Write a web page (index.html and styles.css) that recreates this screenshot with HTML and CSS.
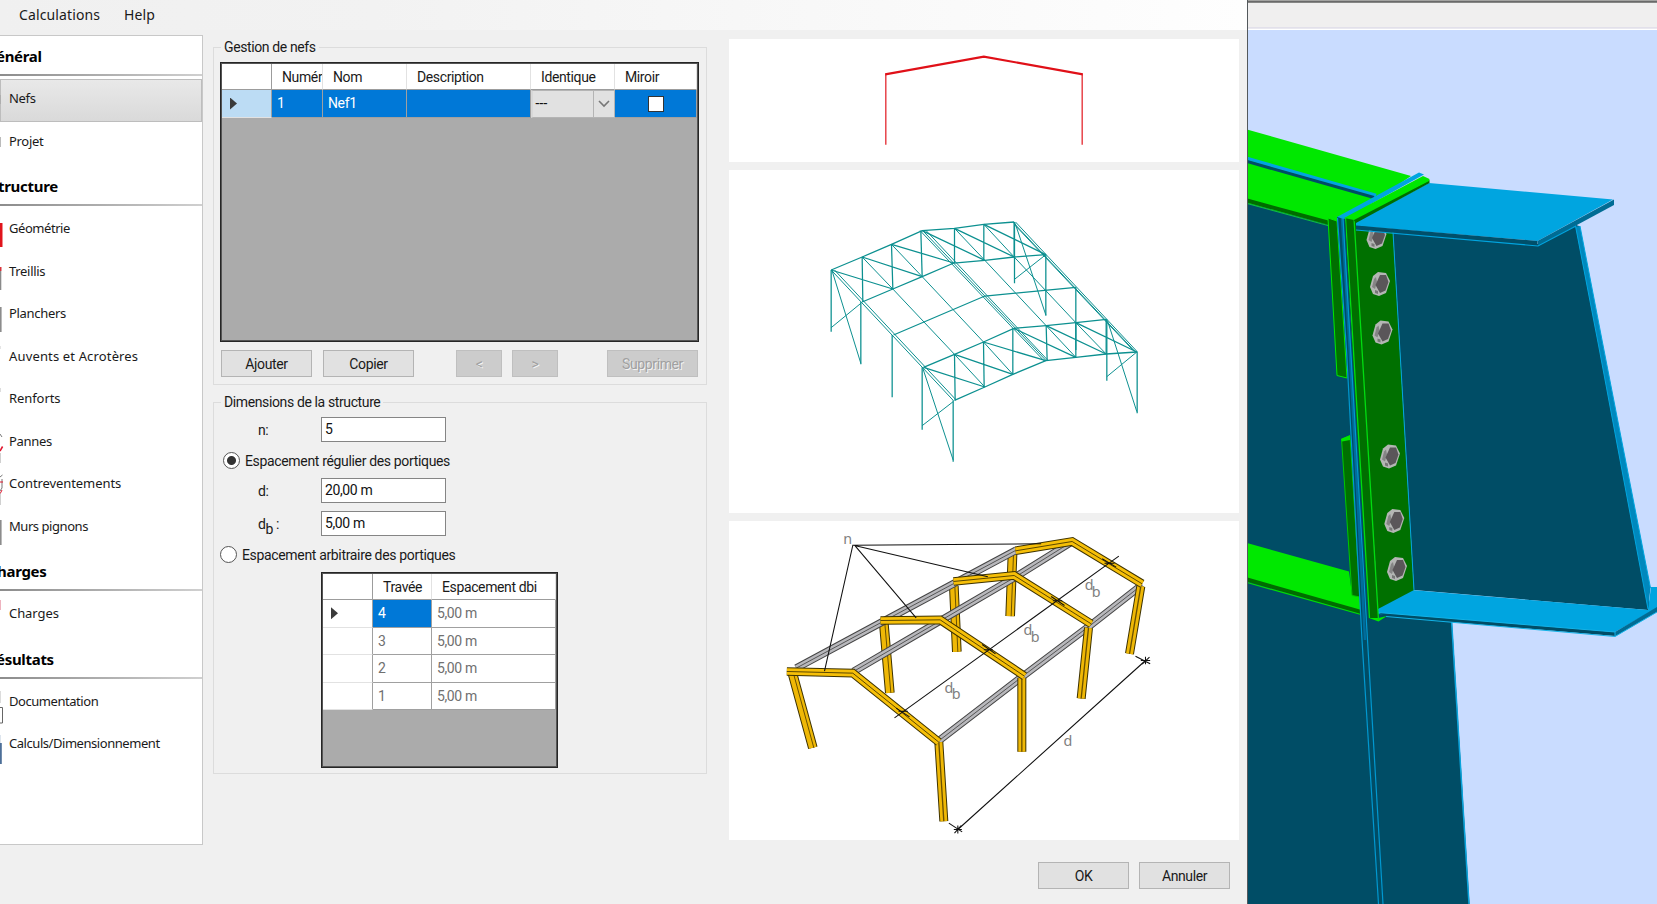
FILE: index.html
```html
<!DOCTYPE html>
<html lang="fr">
<head>
<meta charset="utf-8">
<title>Structure</title>
<link rel="stylesheet" href="styles.css">
</head>
<body>
<div class="dialog">
  <nav class="menu"><span>Calculations</span><span>Help</span></nav>
  <div class="content">
    <aside class="sidebar">
      <h2 class="first h-general">énéral</h2>
      <ul>
        <li class="active"><svg width="4" height="42" viewBox="0 0 4 42"><path d="M.3 16v9" stroke="#aaa"/></svg>Nefs</li>
        <li><svg width="4" height="42" viewBox="0 0 4 42"><path d="M.3 15v10" stroke="#aaa"/></svg>Projet</li>
      </ul>
      <h2 class="h-structure">tructure</h2>
      <ul>
        <li class="snug"><svg width="4" height="42" viewBox="0 0 4 42"><path d="M0 14h2.500v24H0z" fill="#e0141c"/></svg>Géométrie</li>
        <li><svg width="4" height="42" viewBox="0 0 4 42"><path d="M0 15h1.500v4H0z" fill="#d8343c"/><path d="M0 19h1.300v19H0z" fill="#8a8a8a"/></svg>Treillis</li>
        <li><svg width="4" height="42" viewBox="0 0 4 42"><path d="M0 13h1.600v25H0z" fill="#8c8c8c"/></svg>Planchers</li>
        <li class="wide"><svg width="4" height="42" viewBox="0 0 4 42"><path d="M0 9v3" stroke="#ccc"/></svg>Auvents et Acrotères</li>
        <li class="loose"><svg width="4" height="42" viewBox="0 0 4 42"><path d="M0 9v4" stroke="#bbb"/></svg>Renforts</li>
        <li><svg width="4" height="42" viewBox="0 0 4 42"><path d="M0 12l2 3" stroke="#777" fill="none"/><path d="M0 29l2.600-4.500" stroke="#e0142c" stroke-width="1.500"/><path d="M.2 31v10" stroke="#bbb"/></svg>Pannes</li>
        <li class="loose"><svg width="4" height="42" viewBox="0 0 4 42"><path d="M0 13l2.500-2M0 27l2-3V15" stroke="#777" fill="none"/><path d="M0 18h3M0 30l2-4" stroke="#e0142c"/><path d="M.2 29v12" stroke="#bbb"/></svg>Contreventements</li>
        <li class="snug"><svg width="4" height="42" viewBox="0 0 4 42"><path d="M0 13h1.600v25H0z" fill="#8c8c8c"/></svg>Murs pignons</li>
      </ul>
      <h2 class="h-charges">harges</h2>
      <ul>
        <li class="loose"><svg width="4" height="42" viewBox="0 0 4 42"><path d="M.3 6v10" stroke="#eaa0b0"/></svg>Charges</li>
      </ul>
      <h2 class="h-resultats">ésultats</h2>
      <ul>
        <li class="snug"><svg width="4" height="42" viewBox="0 0 4 42"><path d="M.2 9v12" stroke="#ccc"/><path d="M0 25.500h2.500v15.500H0" stroke="#666" fill="none"/></svg>Documentation</li>
        <li class="snug"><svg width="4" height="42" viewBox="0 0 4 42"><path d="M0 11v8" stroke="#bcd"/><path d="M0 19h1.800v21H0z" fill="#4d6f98"/></svg>Calculs/Dimensionnement</li>
      </ul>
    </aside>

    <main class="main">
      <fieldset class="group group-nefs">
        <legend>Gestion de nefs</legend>
        <div class="grid grid-nefs">
          <div class="gh"></div><div class="gh">Numér</div><div class="gh">Nom</div><div class="gh">Description</div><div class="gh">Identique</div><div class="gh">Miroir</div>
          <div class="rowhead sel"><i class="arrow"></i></div>
          <div class="cell blue">1</div><div class="cell blue">Nef1</div><div class="cell blue"></div>
          <div class="combo"><span>---</span><b><svg width="12" height="8" viewBox="0 0 12 8"><path d="M1 1l5 5 5-5" fill="none" stroke="#777" stroke-width="1.600"/></svg></b></div>
          <div class="cell blue check"><i></i></div>
        </div>
        <div class="buttons">
          <button>Ajouter</button><button class="copy">Copier</button>
          <button class="off small prev">&lt;</button><button class="off small">&gt;</button>
          <button class="off del">Supprimer</button>
        </div>
      </fieldset>

      <fieldset class="group group-dim">
        <legend>Dimensions de la structure</legend>
        <div class="field f-n"><label>n:</label><div class="input">5</div></div>
        <div class="radio r1"><i class="on"></i><span>Espacement régulier des portiques</span></div>
        <div class="field"><label>d:</label><div class="input">20,00 m</div></div>
        <div class="field f-db"><label>d<sub>b</sub> :</label><div class="input">5,00 m</div></div>
        <div class="radio r2"><i></i><span>Espacement arbitraire des portiques</span></div>
        <div class="grid grid-bays">
          <div class="gh"></div><div class="gh">Travée</div><div class="gh">Espacement dbi</div>
          <div class="rowhead"><i class="arrow"></i></div><div class="cell blue">4</div><div class="cell">5,00 m</div>
          <div class="rowhead"></div><div class="cell">3</div><div class="cell">5,00 m</div>
          <div class="rowhead"></div><div class="cell">2</div><div class="cell">5,00 m</div>
          <div class="rowhead"></div><div class="cell">1</div><div class="cell">5,00 m</div>
        </div>
      </fieldset>
    </main>

    <section class="previews">
      <svg class="p1" width="510" height="123" viewBox="729.500 39 510 123">
        <g transform="translate(725 30) scale(.33333)" fill="none" stroke="#e01018">
          <path d="M484 344V133M1073 344V133" stroke-width="3.500"/>
          <path d="M482 133L778 80L1075 133" stroke-width="6.500"/>
        </g>
      </svg>
      <svg class="p2" width="510" height="343" viewBox="729.500 170 510 343">
        <g transform="translate(800 200) scale(.33333)" fill="none" stroke="#0c9090" stroke-width="3.800">
          <path d="M95 210L188 171L276 133L368 92L465 85L553 73L644 66"/>
          <path d="M188 306L280 267L368 230L463 189L556 181L644 171L739 164"/>
          <path d="M282 405L556 288L829 262"/>
          <path d="M372 502L465 463L552 426L643 385L740 377L829 368L921 358"/>
          <path d="M465 601L556 561L640 523L739 482L829 472L920 462L1012 456"/>
          <path stroke-width="3" d="M95 210L461 601M105 210L470 600M362 92L733 482M370 92L740 482M380 92L746 482M640 66L1008 456M648 66L1014 456M646 75L1000 450"/>
          <path stroke-width="3" d="M188 171L280 267L465 463L556 561M276 133L368 230L552 426L640 523M465 85L556 181L740 377L829 472M553 73L644 171L829 368L920 462"/>
          <path d="M188 171L190 306M276 133L280 267M364 92L368 230M465 85L465 189M553 73V181M644 66V171M95 210L280 267M188 171L368 230M276 133L463 189M368 92L556 181M465 85L644 171M553 73L739 164"/>
          <path d="M465 463L467 601M552 426L554 561M640 385V523M740 377L743 482M829 368V472M920 358V462M372 502L556 561M465 463L640 523M552 426L739 482M643 385L829 472M740 377L920 462M829 368L1012 456"/>
          <path d="M95 210V395M184 306V493M278 405V592M368 502V689M461 601V785M645 66V250M739 164V347M829 262V450M922 358V542M1013 456V640"/>
          <path stroke-width="3" d="M97 210L184 490M95 383L184 310M370 505L461 780M368 677L461 605M647 70L739 345M645 238L739 164M924 362L1012 635M922 530L1012 456"/>
        </g>
      </svg>
      <svg class="p3" width="510" height="319" viewBox="729.500 521 510 319">
        <defs>
          <path id="post-back" d="M729 105L722 290M553 200L562 397M343 312L361 520M69 462L130 685"/>
          <path id="post-front" d="M1114 200L1080 403M957 325L935 537M757 475V697M508 668L523 905"/>
          <path id="purlin" d="M80 446L335 309L555 191L740 92M252 456L512 304L735 174L905 68M508 664L760 470L962 318L1118 196"/>
          <path id="rafter" d="M52 456L250 461L508 668M333 303L512 301L765 470M552 186L734 168L965 313M738 94L908 66L1118 193"/>
        </defs>
        <g transform="translate(770 519.500) scale(.33333)" fill="none">
          <use href="#post-back" stroke="#3d3200" stroke-width="29"/><use href="#post-back" stroke="#efb806" stroke-width="23"/><use href="#post-back" stroke="#6b5100" stroke-width="3" transform="translate(3 0)"/>
          <use href="#purlin" stroke="#444" stroke-width="23"/><use href="#purlin" stroke="#b8b8bc" stroke-width="17"/><use href="#purlin" stroke="#555" stroke-width="3"/>
          <use href="#post-front" stroke="#3d3200" stroke-width="27"/><use href="#post-front" stroke="#efb806" stroke-width="21"/><use href="#post-front" stroke="#6b5100" stroke-width="4"/>
          <use href="#rafter" stroke="#3d3200" stroke-width="26"/><use href="#rafter" stroke="#f6bf08" stroke-width="20"/><use href="#rafter" stroke="#5a4600" stroke-width="3"/>
          <g stroke="#111" stroke-width="3.200">
            <path d="M815 73L250 77L165 455M255 77L440 295M255 78L655 172"/>
            <path d="M375 595L1048 110M565 930L1128 423"/>
            <path d="M538 911L578 937M553 930H577M565 918V942M555 941L575 918M1098 410L1142 433M1114 423H1142M1128 412V434M1118 434L1140 413"/>
            <path d="M380 566L420 592M387 575H415M638 375L678 403M643 391H670M845 231L885 258M850 244H878M998 118L1040 143M1005 131H1035"/>
          </g>
          <g fill="#808080" class="dims">
            <text x="221" y="74">n</text>
            <text x="525" y="521">d</text><text x="547" y="540">b</text>
            <text x="762" y="348">d</text><text x="784" y="367">b</text>
            <text x="946" y="213">d</text><text x="967" y="233">b</text>
            <text x="882" y="679">d</text>
          </g>
        </g>
      </svg>
    </section>
  </div>
  <footer class="footer"><button>OK</button><button>Annuler</button></footer>
</div>

<svg class="model" width="410" height="904" viewBox="1247 0 410 904">
  <defs>
    <g id="bolt">
      <path d="M-2-12L6-11L10-3L6 9L-1 12L-7 10L-10 3L-7-8Z" fill="#b4b6b4"/>
      <path d="M-4-7L-6-5L-8 3L-5 5L-3-2Z" fill="#858585"/>
      <path d="M-5 6L-2 7L-2 10L-5 9Z" fill="#777"/>
      <path d="M0-9L6-9L8.500-2L5.500 6.500L0 9L-4.500 1Z" fill="#5a5659"/>
    </g>
  </defs>
  <path fill="#c9dcff" d="M1247 0h410v904h-410z"/>
  <path fill="#f0efef" d="M1247 0h410v27h-410z"/>
  <path fill="#e2e0ea" d="M1247 27h410v2h-410z"/>
  <path fill="#fff" d="M1247 28.700h410v1.300h-410z"/>
  <path fill="#a3a3a1" d="M1247 0h410v3h-410z"/>
  <path fill="#6a6a6a" d="M1247 1h410v1.500h-410z"/>
  <path fill="#004d66" d="M1247 200L1340 226L1380 610L1452 622L1469.500 904H1247Z"/>
  <path d="M1451.500 620L1469 904" stroke="#0aa4dc" stroke-width="1.500"/>
  <path fill="#00e800" d="M1247 129.500L1411 176L1376 200L1345 222L1337 227L1247 203Z"/>
  <path d="M1247 158.500L1376 195.500" stroke="#00a5e0" stroke-width="3.500"/>
  <path d="M1247 161.500L1374 197.500" stroke="#004d66" stroke-width="3"/>
  <path d="M1247 200.500L1337 225" stroke="#006c00" stroke-width="4"/>
  <path d="M1247 203.500L1337 228" stroke="#10c040" stroke-width="1"/>
  <path fill="#00e800" d="M1247 543L1349 571.500L1352 594L1364 597V613L1247 581Z"/>
  <path d="M1247 579.500L1361 612" stroke="#006c00" stroke-width="4"/>
  <path d="M1247 582.500L1361 614.500" stroke="#00e000" stroke-width="1.200"/>
  <path fill="#007000" stroke="#00e800" d="M1328 218L1337 221L1347 378L1337 375.500Z"/>
  <path fill="#007000" stroke="#00c800" d="M1341.500 439L1350 436L1360 597L1352 595.500Z"/>
  <path fill="#00e800" d="M1341 439L1350 435V440L1342 441.500Z"/>
  <path fill="#004d66" d="M1393 232L1538 244L1576 225L1579 226L1650 605L1648 610L1414 590Z"/>
  <path fill="#0088bd" d="M1575.500 226.500L1580 226L1602 340L1650.500 588L1648 609L1598.500 345Z"/>
  <path d="M1575.500 226L1598.500 345L1648 609M1580 226L1602 340L1650.500 588" stroke="#00a6df" fill="none"/>
  <path fill="#00a5e0" d="M1412 590L1648 610L1651 587H1657V608L1615 632L1378 614V608Z"/>
  <path fill="#004d66" d="M1378 612.500L1615 632V636L1386 616.500Z"/>
  <path fill="#006c94" d="M1615 632L1657 607V612L1615 636.500Z"/>
  <path d="M1386 616.500L1615 636.500L1657 612M1378 612.500L1615 632V636" stroke="#12b3e8" fill="none"/>
  <path fill="#007000" d="M1354 220L1393 231L1414 590L1378 609Z"/>
  <path d="M1393 232L1414 590" stroke="#00a5e0"/>
  <use href="#bolt" x="1376.500" y="237"/><use href="#bolt" x="1380" y="284"/><use href="#bolt" x="1382.500" y="332.500"/>
  <use href="#bolt" x="1390" y="456.500"/><use href="#bolt" x="1394.300" y="521"/><use href="#bolt" x="1397" y="569"/>
  <path fill="#006f00" d="M1344 217L1356 218L1378.500 621L1369 618Z"/>
  <path fill="#00e800" d="M1369 618L1378.500 618L1387 616L1378.500 621.500Z"/>
  <path d="M1345.500 218L1369.500 618M1354 218L1378.500 620" stroke="#00dc10" stroke-width="1.300"/>
  <path d="M1337 217L1345 217L1352.500 350L1368 640L1383.500 904H1378.500L1362 640L1346 350Z" fill="#004d66"/>
  <path d="M1342 218L1350 355L1365 640" stroke="#006c9c" stroke-width="2.500" fill="none"/>
  <path d="M1337.500 218L1346.500 350L1362 640L1378.500 904M1343 218L1351 355L1367.500 640L1383 904" stroke="#0098d0" fill="none" stroke-width="1.200"/>
  <path fill="#00a5e0" d="M1429 183L1613 199.500L1537.500 241L1356 226V222Z"/>
  <path fill="#004f6a" d="M1356 225.500L1537.500 241V245L1356 229.500Z"/>
  <path fill="#006c94" d="M1537.500 241L1614 199.500V205L1538 246Z"/>
  <path d="M1356 230L1538 246L1576 226" stroke="#00a5e0" fill="none" stroke-width="1.200"/>
  <path fill="#00a5e0" d="M1337 217L1419 172.500L1424 174.500L1344 219Z"/>
  <path fill="#006c00" d="M1353 219L1429.500 180V183L1356 223Z"/>
  <path fill="#00e800" d="M1344 218L1423 176L1429.500 179L1429 181L1354 220Z"/>
  <path d="M1247.500 0V904" stroke="#53585c"/>
</svg>
</body>
</html>
```
FILE: styles.css
```css
* { box-sizing: border-box; }
body {
  margin: 0;
  width: 1657px;
  height: 904px;
  overflow: hidden;
  display: flex;
  background: #f0f0f0;
  color: #1a1a1a;
  font: 14px/16px Roboto, "Liberation Sans", sans-serif;
  letter-spacing: -0.38px;
}
.dialog { width: 1247px; height: 904px; display: flex; flex-direction: column; flex: none; }
.model { display: block; flex: none; }

.menu {
  height: 30px;
  padding: 0 0 0 19px;
  display: flex;
  gap: 24px;
  align-items: center;
  background: linear-gradient(90deg, #f0f0f0, #f2f2f2 30%, #fefefe);
  font: 14px/30px "Noto Sans", sans-serif;
  letter-spacing: 0.12px;
}

.content { display: flex; height: 814px; }
.sidebar {
  width: 203px;
  height: 810px;
  margin-top: 5px;
  flex: none;
  overflow: hidden;
  background: #fff;
  border: 1.5px solid #c8c8c8;
  border-left: 0;
  font: 13px/16px "Noto Sans", sans-serif;
  letter-spacing: -0.3px;
}
.sidebar h2 {
  margin: 0 0 3px;
  height: 42px;
  padding-top: 12px;
  border-bottom: 2px solid;
  border-image: linear-gradient(90deg, #8c8c8c, #d0d0d0) 1;
  font: bold 15px/20px "Noto Sans", sans-serif;
  letter-spacing: -0.3px;
  color: #000;
}
.sidebar h2.first { height: 40px; padding-top: 10px; }
.h-general, .h-resultats { text-indent: -4px; }
.h-structure { text-indent: -2px; }
.h-charges { text-indent: -3px; }
.sidebar ul { list-style: none; margin: 0; padding: 0; }
.sidebar li { height: 42.5px; display: flex; gap: 5px; line-height: 39px; }
.sidebar li svg { flex: none; }
.sidebar .snug { letter-spacing: -0.45px; }
.sidebar .loose { letter-spacing: -0.08px; }
.sidebar .wide { letter-spacing: 0.15px; }
.sidebar .active {
  background: linear-gradient(#e9e9e9, #d9d9d9);
  box-shadow: inset 0 0 0 1px #bdbdbd;
}

.main { width: 494px; margin: 9px 0 0 10px; flex: none; }
.group {
  margin: 0;
  padding: 0 0 0 6px;
  border: 1px solid #dcdcdc;
  min-width: 0;
}
.group legend { padding: 0 3px; margin-left: 1px; height: 16px; }
.group-nefs { height: 346px; }
.group-dim { height: 380px; margin-top: 9px; }

.grid { display: grid; background: #ababab; border: 1px solid #262626; box-shadow: inset 0 0 0 1px #555; padding: 1px; align-content: start; }
.grid-nefs { width: 479px; height: 280px; margin-top: 7px; grid-template-columns: 50px 51px 84px 124px 84px 82px; grid-template-rows: 26px 28px; }
.grid-bays { width: 237px; height: 196px; margin: 9px 0 0 101px; grid-template-columns: 50px 59px 124px; grid-template-rows: 26px repeat(4, 27.5px); }
.gh {
  background: #fff;
  border-right: 1px solid #e2e2e2;
  border-bottom: 1px solid #9c9c9c;
  padding-left: 10px;
  line-height: 26px;
  overflow: hidden;
  white-space: nowrap;
}
.gh:first-child { border-right-color: #9c9c9c; }
.rowhead { background: #fff; border-right: 1px solid #a0a0a0; border-bottom: 1px solid #e2e2e2; display: flex; align-items: center; padding-left: 8px; }
.rowhead.sel { background: #bcdcf4; }
.arrow { width: 7px; height: 12px; background: #3a3a3a; clip-path: polygon(0 0, 100% 50%, 0 100%); }
.cell { background: #fff; color: #707070; border-right: 1px solid #a0a0a0; border-bottom: 1px solid #a0a0a0; padding-left: 5px; line-height: 27px; }
.cell.blue { background: #0078d7; color: #fff; }
.combo { display: flex; background: #e1e1e1; border: 1px solid #b4b4b4; border-left: 2px solid #d8d8d8; color: #111; line-height: 25px; }
.combo span { flex: 1; padding-left: 2px; letter-spacing: -0.6px; font-family: "Liberation Sans", sans-serif; }
.combo b { width: 21px; border-left: 1px solid #b4b4b4; display: flex; align-items: center; justify-content: center; padding-right: 1px; }
.check { display: flex; align-items: center; justify-content: center; padding: 0; }
.check i { width: 16px; height: 16px; background: #fff; border: 1px solid #333; }

.buttons { display: flex; margin: 8px 0 0 1px; }
button {
  width: 91px;
  height: 27px;
  padding: 0;
  border: 1.5px solid #b4b4b4;
  background: #e1e1e1;
  color: #1a1a1a;
  font: inherit;
  letter-spacing: inherit;
}
.copy { margin-left: 11px; }
.small { width: 46px; margin-right: 10px; }
.prev { margin-left: 42px; }
button.off { background: #cccccc; border-color: #bfbfbf; color: #a0a0a0; text-shadow: 1px 1px 0 #f4f4f4; }
.del { margin-left: 39px; }

.field { display: flex; align-items: center; height: 25px; padding-left: 38px; }
.field label { width: 63px; }
.f-n { margin-top: 7px; }
.f-db { margin-top: 8px; }
.field sub { font-size: 14px; line-height: 0; vertical-align: -5px; }
.input { width: 125px; height: 25px; border: 1px solid #858585; background: #fff; padding-left: 3px; line-height: 23px; color: #111; }
.radio { display: flex; align-items: center; height: 17px; gap: 5px; letter-spacing: -0.34px; }
.radio i { width: 17px; height: 17px; border-radius: 50%; border: 1.5px solid #555; background: #fff; }
.radio i.on { background: radial-gradient(circle, #333 4px, #fff 5px); }
.r1 { margin: 10px 0 9px 3px; }
.r2 { margin: 10px 0 0 0; }

.previews { margin: 9px 0 0 22px; display: flex; flex-direction: column; }
.previews svg { background: #fff; display: block; flex: none; }
.p2 { margin: 8px 0 8px; }
.dims text { font: 43px "Noto Sans", sans-serif; letter-spacing: 0; }

.footer { display: flex; gap: 10px; justify-content: flex-end; padding: 18px 17px 0 0; }
```
